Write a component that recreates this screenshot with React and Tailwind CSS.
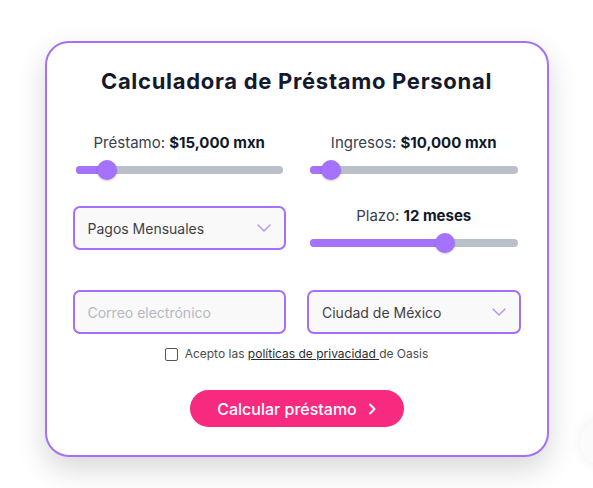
import React from "react";

function Slider({ pct }) {
  return (
    <div className="relative mt-[7px] h-5 mx-[3px]">
      <div className="absolute left-0 right-0 top-[6px] h-[8px] rounded-full bg-[#b9c0c9]" />
      <div
        className="absolute left-0 top-[6px] h-[8px] rounded-full bg-[#a472fb]"
        style={{ width: `${pct}%` }}
      />
      <div
        className="absolute top-0 h-5 w-5 -ml-[10px] rounded-full bg-[#a472fb] shadow-[0_1px_2px_rgba(0,0,0,0.2)]"
        style={{ left: `${pct}%` }}
      />
    </div>
  );
}

function Chevron({ className }) {
  return (
    <svg className={className} width="14" height="8" viewBox="0 0 14 8" fill="none">
      <path d="M1 1L7 7L13 1" stroke="#b48cf8" strokeWidth="1.3" strokeLinecap="round" strokeLinejoin="round" />
    </svg>
  );
}

function SelectBox({ label }) {
  return (
    <div className="h-[44px] rounded-[7px] border-2 border-[#a66ffa] bg-[#f9f9f9] flex items-center justify-between pl-[13px] pr-[13px]">
      <span className="text-[14px] text-[#3f3f46]">{label}</span>
      <Chevron />
    </div>
  );
}

export default function App() {
  return (
    <div className="relative w-[593px] h-[488px] overflow-hidden bg-white" style={{ fontFamily: "Inter, 'Liberation Sans', sans-serif" }}>
      <div className="absolute left-[580px] top-[418px] h-[48px] w-[48px] rounded-full bg-[#fbfbfb] shadow-[0_0_14px_rgba(0,0,0,0.07)]" />
      <div className="relative mx-auto mt-[41px] w-[504px] h-[416px] rounded-[24px] border-2 border-[#a66ffa] bg-white shadow-[0_12px_30px_rgba(0,0,0,0.16)] px-[26px] pt-6">
        <h1 className="text-center text-[22px] leading-[28px] font-bold text-[#141a2c] tracking-[0.7px]" style={{ fontFamily: "Inter, sans-serif" }}>
          Calculadora de Préstamo Personal
        </h1>

        <div className="mt-[38px] grid grid-cols-2 gap-x-[21px]">
          <div>
            <p className="text-center text-[15px] leading-[20px] text-[#374151]">
              Préstamo: <span className="font-bold text-[#111827]">$15,000 mxn</span>
            </p>
            <Slider pct={15} />
          </div>
          <div>
            <p className="text-center text-[15px] leading-[20px] text-[#374151]">
              Ingresos: <span className="font-bold text-[#111827]">$10,000 mxn</span>
            </p>
            <Slider pct={10} />
          </div>
        </div>

        <div className="mt-[26px] grid grid-cols-2 gap-x-[21px] items-start">
          <SelectBox label="Pagos Mensuales" />
          <div>
            <p className="text-center text-[15px] leading-[20px] text-[#374151]">
              Plazo: <span className="font-bold text-[#111827]">12 meses</span>
            </p>
            <Slider pct={65} />
          </div>
        </div>

        <div className="mt-[37px] grid grid-cols-2 gap-x-[21px]">
          <div className="h-[44px] rounded-[7px] border-2 border-[#a66ffa] bg-[#f9f9f9] flex items-center pl-[13px]">
            <span className="text-[14px] text-[#b3b8c2]">Correo electrónico</span>
          </div>
          <SelectBox label="Ciudad de México" />
        </div>

        <div className="mt-[12px] flex items-center justify-center gap-[7px] h-4">
          <div className="h-[13px] w-[13px] rounded-[2px] border border-[#555] bg-white" />
          <span className="text-[12px] leading-4 text-[#4b4b50]">
            Acepto las <span className="underline text-[#2b2b30]">políticas de privacidad </span>de Oasis
          </span>
        </div>

        <div className="mt-[28px] flex justify-center">
          <button className="h-[37px] w-[214px] rounded-full bg-[#f72a7f] text-white flex items-center justify-center gap-[11px] text-[16px] font-medium">
            <span>Calcular préstamo</span>
            <svg width="8" height="12" viewBox="0 0 8 12" fill="none">
              <path d="M2 1.5L6.5 6L2 10.5" stroke="white" strokeWidth="2" strokeLinecap="round" strokeLinejoin="round" />
            </svg>
          </button>
        </div>
      </div>
    </div>
  );
}
